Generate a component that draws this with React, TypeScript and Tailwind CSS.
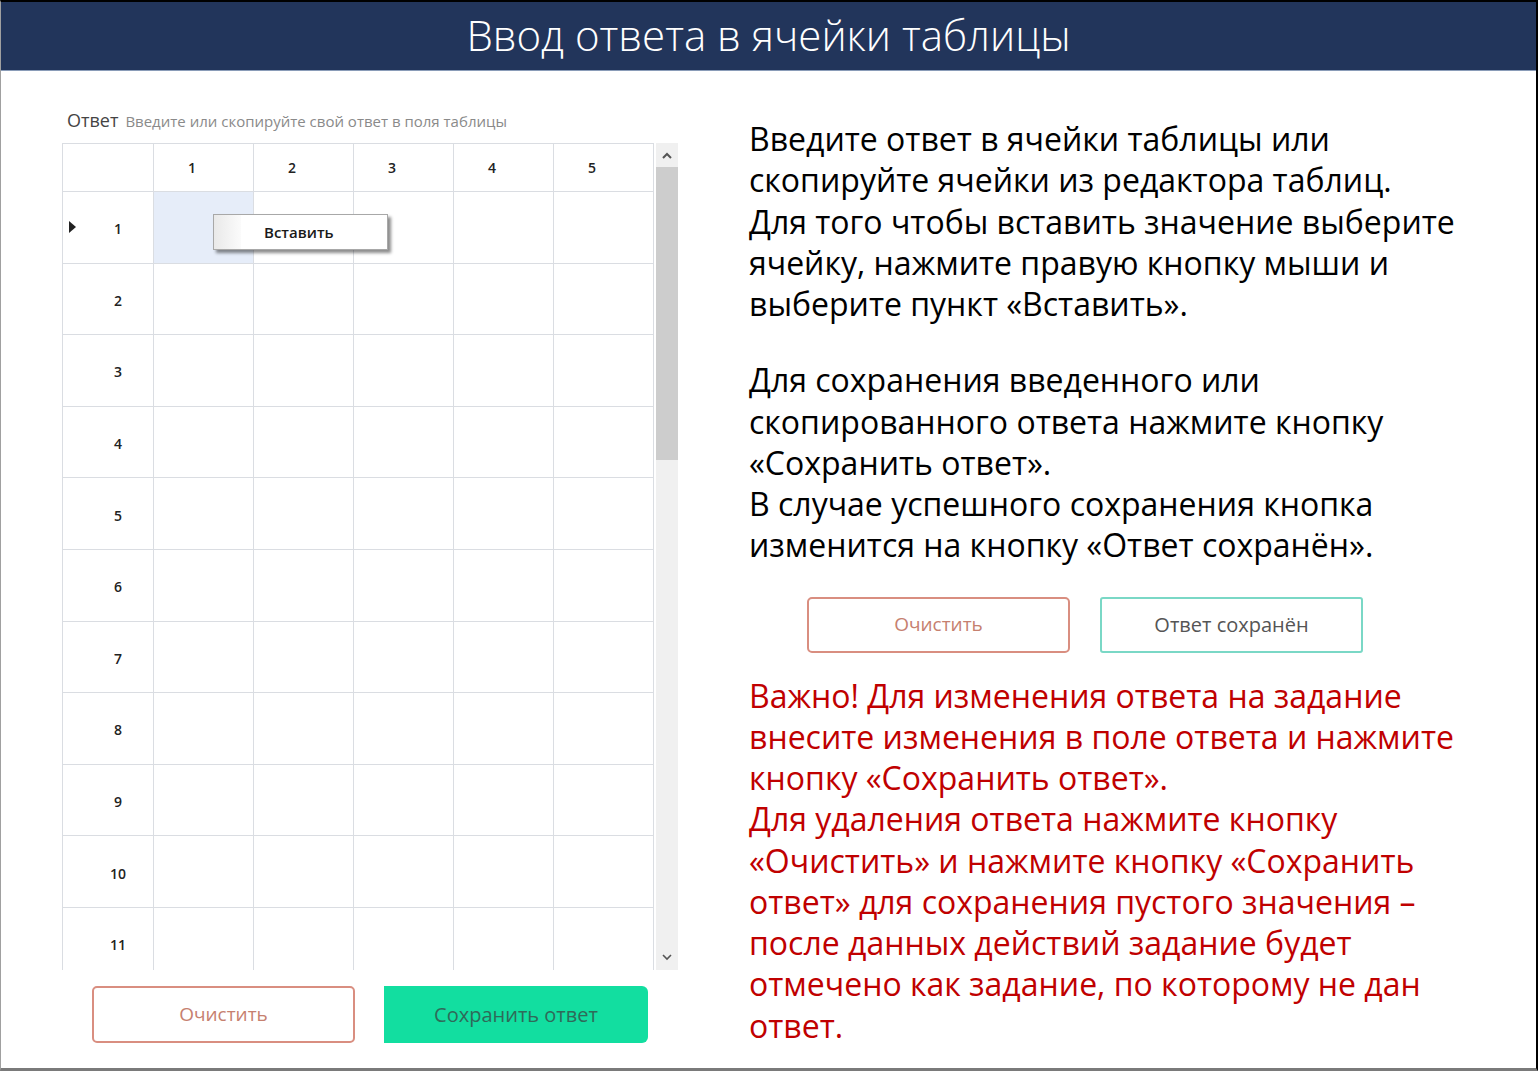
import React from "react";

const cols = [1, 2, 3, 4, 5];
const rows = [1, 2, 3, 4, 5, 6, 7, 8, 9, 10, 11];

const infoLines = [
  "Введите ответ в ячейки таблицы или",
  "скопируйте ячейки из редактора таблиц.",
  "Для того чтобы вставить значение выберите",
  "ячейку, нажмите правую кнопку мыши и",
  "выберите пункт «Вставить».",
];

const saveLines = [
  "Для сохранения введенного или",
  "скопированного ответа нажмите кнопку",
  "«Сохранить ответ».",
  "В случае успешного сохранения кнопка",
  "изменится на кнопку «Ответ сохранён».",
];

const warnLines = [
  "Важно! Для изменения ответа на задание",
  "внесите изменения в поле ответа и нажмите",
  "кнопку «Сохранить ответ».",
  "Для удаления ответа нажмите кнопку",
  "«Очистить» и нажмите кнопку «Сохранить",
  "ответ» для сохранения пустого значения –",
  "после данных действий задание будет",
  "отмечено как задание, по которому не дан",
  "ответ.",
];

function TextBlock({ lines, className }: { lines: string[]; className?: string }) {
  return (
    <div className={`text-[32px] leading-[41.25px] whitespace-nowrap ${className ?? ""}`}>
      {lines.map((l) => (
        <div key={l}>{l}</div>
      ))}
    </div>
  );
}

function AnswerTable() {
  return (
    <div className="relative flex h-[827px] w-[616px] overflow-hidden">
      <div className="w-[592px] border-l border-t border-[#dadde2]">
        <div className="flex h-[48px]">
          <div className="w-[91px] shrink-0 border-r border-b border-[#dadde2]" />
          {cols.map((c) => (
            <div
              key={c}
              className="flex w-[100px] shrink-0 items-center border-r border-b border-[#dadde2] pl-[34px] text-[14px] font-semibold text-[#222]"
            >
              {c}
            </div>
          ))}
        </div>
        {rows.map((r) => (
          <div key={r} className="flex h-[71.6px]">
            <div className="relative flex w-[91px] shrink-0 items-center justify-center border-r border-b border-[#dadde2] pl-[20px] pt-[3px] text-[14px] font-semibold text-[#222]">
              {r === 1 && (
                <span className="absolute left-[6px] top-1/2 h-0 w-0 -translate-y-1/2 border-y-[6px] border-l-[7px] border-y-transparent border-l-[#222]" />
              )}
              {r}
            </div>
            {cols.map((c) => (
              <div
                key={c}
                className={`w-[100px] shrink-0 border-r border-b border-[#dadde2] ${
                  r === 1 && c === 1 ? "bg-[#e6edf9]" : ""
                }`}
              />
            ))}
          </div>
        ))}
      </div>

      {/* scrollbar */}
      <div className="ml-[2px] flex w-[22px] flex-col bg-[#f0f0f0]">
        <div className="flex h-[24px] items-center justify-center">
          <svg width="10" height="7" viewBox="0 0 10 7">
            <path d="M1 6 L5 2 L9 6" fill="none" stroke="#555" strokeWidth="2" />
          </svg>
        </div>
        <div className="h-[293px] bg-[#cdcdcd]" />
        <div className="flex-1" />
        <div className="flex h-[24px] items-start justify-center pt-[8px]">
          <svg width="10" height="7" viewBox="0 0 10 7">
            <path d="M1 1 L5 5 L9 1" fill="none" stroke="#555" strokeWidth="1.6" />
          </svg>
        </div>
      </div>

      {/* context menu */}
      <div className="absolute left-[151px] top-[71px] flex h-[36px] w-[175px] border border-[#a8a8a8] bg-white shadow-[3px_3px_3px_rgba(0,0,0,0.45)]">
        <div className="w-[27px] bg-gradient-to-r from-[#e9e9e9] to-[#fbfbfb]" />
        <div className="flex items-center pl-[23px] text-[15px] font-semibold text-[#1a1a1a]">
          Вставить
        </div>
      </div>
    </div>
  );
}

export default function App() {
  return (
    <div
      className="h-[1074px] w-[1538px] bg-white"
      style={{ fontFamily: '"Open Sans", "Noto Sans", sans-serif' }}
    >
      <div className="flex h-[1071px] flex-col border-t-2 border-r-2 border-b-[3px] border-l border-t-black border-r-black border-b-[#7a7a7a] border-l-[#a0a0a0]">
        <div className="flex h-[69px] shrink-0 items-center justify-center border-b border-[#8a9cb8] bg-[#22355b] pb-[3px]">
          <h1 className="text-[42px] font-light text-white">
            Ввод ответа в ячейки таблицы
          </h1>
        </div>

        <div className="flex flex-1">
          <div className="ml-[61px] flex flex-col pt-[36px]">
            <div className="flex h-[22px] items-baseline gap-[7px] pl-[5px]">
              <span className="text-[18px] text-[#444]">Ответ</span>
              <span className="text-[15px] text-[#8a8a8a]">
                Введите или скопируйте свой ответ в поля таблицы
              </span>
            </div>
            <div className="mt-[14px]">
              <AnswerTable />
            </div>
            <div className="mt-[16px] flex gap-[29px] pl-[30px]">
              <button className="h-[57px] w-[263px] rounded-[5px] border-2 border-[#d98e80] bg-white text-[19px] text-[#c6806f]">
                Очистить
              </button>
              <button className="h-[57px] w-[264px] rounded-r-[6px] bg-[#12dea0] text-[20px] text-[#2f6a59]">
                Сохранить ответ
              </button>
            </div>
          </div>

          <div className="ml-[71px] flex flex-col pt-[47px] text-black">
            <TextBlock lines={infoLines} />
            <TextBlock lines={saveLines} className="mt-[35px]" />
            <div className="mt-[31px] flex gap-[30px] pl-[58px]">
              <button className="h-[56px] w-[263px] rounded-[5px] border-2 border-[#d98e80] bg-white text-[19px] text-[#c6806f]">
                Очистить
              </button>
              <button className="h-[56px] w-[263px] rounded-[3px] border-2 border-[#7ad8c6] bg-white text-[20px] text-[#555]">
                Ответ сохранён
              </button>
            </div>
            <TextBlock lines={warnLines} className="mt-[22px] text-[#c00000]" />
          </div>
        </div>
      </div>
    </div>
  );
}
